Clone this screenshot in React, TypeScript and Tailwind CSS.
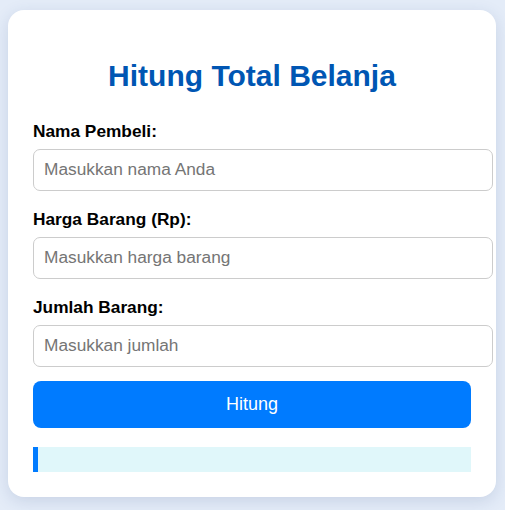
import React from "react";

function Field({ label, placeholder, last }: { label: string; placeholder: string; last?: boolean }) {
  return (
    <div className={last ? "" : "mb-[18.5px]"}>
      <label className="block text-[17.3px] leading-[20px] font-bold text-black mb-[8px]">{label}</label>
      <input
        type="text"
        placeholder={placeholder}
        className="block w-[460px] h-[41.5px] px-[10px] border border-[#cccccc] rounded-[7px] text-[17.3px] bg-white text-black placeholder:text-[#757575] outline-none"
      />
    </div>
  );
}

export default function App() {
  return (
    <div
      className="min-h-screen w-full bg-[#e4ecf8] pt-[10px] pl-[8px]"
      style={{ fontFamily: '"Liberation Sans", Arial, sans-serif' }}
    >
      <div className="w-[488px] bg-white rounded-[16px] p-[25px] shadow-[0_4px_16px_rgba(40,70,130,0.15)]">
        <h2 className="mt-[24px] mb-[28px] text-center text-[30px] leading-[34px] font-bold text-[#0056b3]">
          Hitung Total Belanja
        </h2>
        <Field label="Nama Pembeli:" placeholder="Masukkan nama Anda" />
        <Field label="Harga Barang (Rp):" placeholder="Masukkan harga barang" />
        <Field label="Jumlah Barang:" placeholder="Masukkan jumlah" last />
        <button className="mt-[14.5px] w-[438px] h-[47px] bg-[#007bff] text-white text-[18px] rounded-[8px] flex items-center justify-center">
          Hitung
        </button>
        <div className="mt-[19px] w-[438px] h-[25px] bg-[#e0f7fa] border-l-[5px] border-[#007bff]"></div>
      </div>
    </div>
  );
}
